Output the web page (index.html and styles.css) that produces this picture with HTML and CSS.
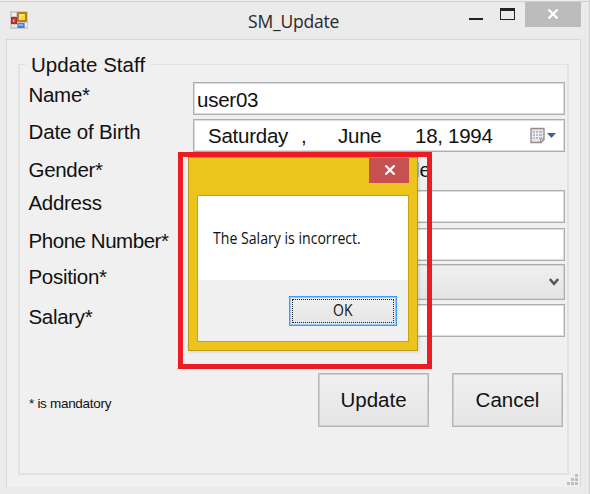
FILE: index.html
```html
<!DOCTYPE html>
<html lang="en">
<head>
<meta charset="utf-8">
<title>SM_Update</title>
<link rel="stylesheet" href="styles.css">
</head>
<body>
<div class="window">
  <header class="titlebar">
    <svg class="app-icon" width="18" height="18" viewBox="0 0 18 18">
      <rect width="18" height="18" fill="#cbcbcd"/>
      <path d="M2 2h4v3H2zM2 14h2v2H2zM5 14h2v2H5zM15 12h2v4h-2z" fill="#eeeef0"/>
      <rect x="7" y="1" width="10" height="10" fill="#ad8420"/><rect x="9" y="3" width="6" height="6" fill="#ffd52f"/><path d="M9 3h5v2H11v3H9z" fill="#ffe36b"/>
      <rect x="1" y="6" width="6" height="7" fill="#a52d28"/><rect x="2.5" y="7.500" width="3" height="4" fill="#dc5144"/><rect x="3" y="9" width="1" height="1.500" fill="#ffd0c0"/>
      <rect x="7.500" y="12" width="7" height="5" fill="#477bd6"/><rect x="8.500" y="13" width="4.500" height="2" fill="#86b2fa"/>
    </svg>
    <h1 class="title">SM_Update</h1>
    <div class="controls">
      <svg width="48" height="24" viewBox="0 0 48 24"><path d="M0 16h14v2H0z" fill="#222"/><path fill-rule="evenodd" d="M31 6h15v12H31zM32 9v8h13V9z" fill="#222"/></svg>
      <div class="close"><svg width="12" height="10" viewBox="0 0 12 10"><path d="M1.500 .5l9 9M10.500 .5l-9 9" stroke="#fff" stroke-width="2.200"/></svg></div>
    </div>
  </header>
  <main class="client">
    <section class="group">
      <h2 class="legend">Update Staff</h2>
      <div class="form">
        <label class="label">Name*</label><div class="field user">user03</div>
        <label class="label dob">Date of Birth</label>
        <div class="field date"><span class="day">Saturday</span><span class="comma">,</span><span class="month">June</span><span class="num">18,</span><span class="year">1994</span>
          <svg class="calendar" width="26" height="18" viewBox="0 0 26 18"><path d="M1 1.500h13v11l-3 3H1z" fill="#e7e5e6" stroke="#958b8c" stroke-width="1.300"/><path d="M3 4h9v8H3z" fill="#b6bdcc"/><path d="M3 6.500h9M3 9.500h9M5.500 4v8M8.500 4v8" stroke="#f7f8fb" stroke-width=".8"/><path d="M10.500 15.500v-3.500H14z" fill="#faf8f8" stroke="#958b8c"/><path d="M17 6h9l-4.500 5z" fill="#465f91"/></svg>
        </div>
        <label class="label gender">Gender*</label><div class="option">le</div>
        <label class="label">Address</label><div class="field"></div>
        <label class="label phone">Phone Number*</label><div class="field"></div>
        <label class="label">Position*</label>
        <div class="field select"><svg width="10" height="8" viewBox="0 0 10 8"><path d="M.8 1L5 5.800 9.200 1" fill="none" stroke="#555" stroke-width="2.500"/></svg></div>
        <label class="label">Salary*</label><div class="field"></div>
      </div>
      <footer class="actions"><span class="note">* is mandatory</span><button class="button">Update</button><button class="button">Cancel</button></footer>
    </section>
    <svg class="grip" width="11" height="11" viewBox="0 0 11 11"><path d="M8 0h3v3H8zM4 4h3v3H4zM8 4h3v3H8zM0 8h3v3H0zM4 8h3v3H4zM8 8h3v3H8z" fill="#c0c0c0"/></svg>
  </main>
</div>
<div class="highlight">
  <div class="dialog">
    <div class="dialog-top"><div class="dialog-close"><svg width="12" height="10" viewBox="0 0 12 10"><path d="M1.500 .5l9 9M10.500 .5l-9 9" stroke="#fff" stroke-width="2.200"/></svg></div></div>
    <div class="dialog-body">
      <p class="message"><span>The Salary is incorrect.</span></p>
      <div class="dialog-actions"><button class="ok"><span>OK</span></button></div>
    </div>
  </div>
</div>
</body>
</html>
```

FILE: styles.css
```css
* { box-sizing: border-box; }
body { margin: 0; width: 590px; height: 494px; overflow: hidden; background: #ebebeb; color: #111; font-family: "Liberation Sans", Arial, sans-serif; }
.window { height: 494px; padding: 0 8px 6px 6px; border-right: 1px solid #cfcfcf; background: linear-gradient(#ebebeb 1px, #cfcfcf 1px, #cfcfcf 2px, #ebebeb 2px); }
.titlebar { display: flex; height: 39px; padding-left: 4px; }
.app-icon { flex: none; margin-top: 11px; }
.title { flex: 1; margin: 0 0 0 220px; padding-top: 9px; font: 400 17.5px/24px "Open Sans", sans-serif; letter-spacing: -.2px; color: #292929; }
.controls { display: flex; flex: none; padding-top: 2px; }
.controls > svg { margin-right: 8px; }
.close { display: flex; align-items: center; justify-content: center; width: 56px; height: 25px; background: #bcbcbc; }
.close svg { margin-right: 1px; margin-bottom: 1px; }
.client { position: relative; height: 448px; width: 575px; padding: 24px 12px; border: 1px solid #d8d8d8; border-bottom: 0; background: #f0f0f0; }
.group { width: 551px; height: 411px; margin-left: -1px; border: 2px solid #e2e2e2; border-top-width: 1px; }
.legend { width: 124px; height: 25px; margin: -13px 0 0 6px; padding-left: 5px; background: #f0f0f0; font-size: 20.5px; font-weight: 400; line-height: 26px; letter-spacing: .05px; white-space: nowrap; }
.form { display: grid; grid-template-columns: 165px 372px; grid-template-rows: 37px 37px 34px 38px 36px 40px 33px; margin: 5px 0 0 8px; }
.label { padding: 1px 0 0 .5px; font-size: 20.5px; line-height: 24px; letter-spacing: -.3px; white-space: nowrap; }
.dob { letter-spacing: -.15px; }
.gender { padding-top: 2px; }
.phone { padding-top: 1px; letter-spacing: -.45px; }
.field { height: 33px; border: 1px solid #adaeb4; box-shadow: inset 0 0 0 1px #dcdce1; background: #fff; font-size: 20.5px; line-height: 33px; padding-left: 3px; letter-spacing: -.25px; white-space: nowrap; }
.date { display: flex; padding-left: 14px; line-height: 31px; }
.day { width: 93px; }
.comma { width: 37px; }
.month { width: 77px; }
.num { width: 33px; }
.year { width: 82px; }
.calendar { margin-top: 7px; }
.option { padding: 2px 0 0 222px; font-size: 20px; line-height: 24px; }
.select { display: flex; height: 36px; align-items: center; justify-content: flex-end; padding-right: 5px; background: linear-gradient(#f0f0f0, #e4e4e4); border-color: #acacac; box-shadow: inset 0 0 0 1px #d4d4d4; }
.actions { display: flex; margin: 36px 0 0 8px; }
.note { flex: none; width: 290px; padding: 23px 0 0 1px; font-size: 13.500px; line-height: 16px; letter-spacing: -.3px; }
.button { flex: none; width: 111px; height: 54px; margin: 0 23px 0 0; padding: 0; border: 1px solid #b4b4b4; box-shadow: inset 0 0 0 1px #d0d0d0; background: linear-gradient(#f0f0f0, #e5e5e5); font: 20.5px "Liberation Sans", Arial, sans-serif; color: #111; }
.grip { position: absolute; right: 2px; bottom: 2px; }
.highlight { position: absolute; left: 178px; top: 152px; width: 254px; height: 217px; border: 5px solid #ed1c24; padding: 0 5px; }
.dialog { width: 230px; height: 194px; border: 1px solid #b99b18; background: #edc41b; box-shadow: 1px 1px 3px #0002; padding: 0 8px; }
.dialog-top { display: flex; justify-content: flex-end; height: 37px; }
.dialog-close { display: flex; align-items: center; justify-content: center; width: 40px; height: 25px; background: #c75050; }
.dialog-close svg { margin: 0 0 1px 1px; }
.dialog-body { height: 147px; border: 1px solid #c5a317; background: #f0f0f0; }
.message { height: 84px; margin: 0; padding: 32px 0 0 15px; background: #fff; font: 15.5px/20px "Open Sans", sans-serif; white-space: nowrap; }
.message span { display: inline-block; transform: scaleX(.91); transform-origin: left; }
.dialog-actions { display: flex; justify-content: flex-end; padding: 16px 11px 0; }
.ok { width: 108px; height: 30px; padding: 0 0 2px; border: 1px solid #3c99ff; outline: 1px dotted #222; outline-offset: -4px; background: linear-gradient(#f0f0f0, #e4e4e4); font: 15.5px/20px "Open Sans", sans-serif; color: #111; box-shadow: inset 0 0 0 1px #99c9fb; }
.ok span { display: inline-block; transform: scaleX(.9); }
```
